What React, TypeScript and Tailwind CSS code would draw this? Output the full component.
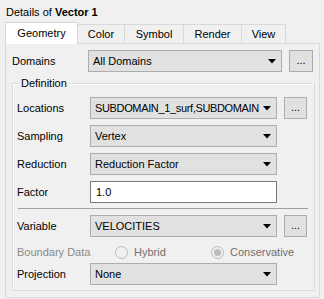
import React from "react";

const font = { fontFamily: '"Liberation Sans", Arial, sans-serif' };

function Arrow() {
  return (
    <svg width="8" height="5" viewBox="0 0 8 5" className="shrink-0">
      <polygon points="0,0 8,0 4,4.5" fill="#000" />
    </svg>
  );
}

function Combo({ text, w, tight }: { text: string; w: string; tight?: boolean }) {
  return (
    <div className={`flex h-[22px] ${w} items-center justify-between gap-[4px] border border-[#adadad] bg-[#e1e1e1] pl-[4px] pr-[5px]`}>
      <span className={`overflow-hidden whitespace-nowrap text-black ${tight ? "tracking-[-0.35px]" : ""}`}>{text}</span>
      <Arrow />
    </div>
  );
}

function Dots({ w }: { w: string }) {
  return (
    <div className={`flex h-[22px] ${w} items-end justify-center border border-[#adadad] bg-[#e1e1e1] pb-[5px] leading-none`}>
      ...
    </div>
  );
}

function Radio({ label, checked }: { label: string; checked?: boolean }) {
  return (
    <div className="flex items-center gap-[6px] text-[#707070]">
      <div className="flex size-[13px] items-center justify-center rounded-full border border-[#bcbcbc] bg-[#f0f0f0]">
        {checked && <div className="size-[7px] rounded-full bg-[#bcbcbc]" />}
      </div>
      <span>{label}</span>
    </div>
  );
}

function Row({ label, children }: { label: string; children: React.ReactNode }) {
  return (
    <div className="flex h-[22px] items-center">
      <div className="w-[73px] shrink-0 text-black">{label}</div>
      {children}
    </div>
  );
}

export default function App() {
  const tabs = [
    { name: "Color", w: "w-[48px]" },
    { name: "Symbol", w: "w-[60px]" },
    { name: "Render", w: "w-[59px]" },
    { name: "View", w: "w-[45px]" },
  ];
  return (
    <div className="h-[299px] w-[324px] overflow-hidden bg-[#f0f0f0] text-[11px] text-black" style={font}>
      <div className="h-[22px] pl-[6px] pt-[5px] leading-[14px]">
        Details of <span className="font-bold">Vector 1</span>
      </div>

      <div className="ml-[5px] flex h-[21px] items-end">
        <div className="relative z-10 -mb-px flex h-[22px] w-[73px] items-center justify-center border border-b-0 border-[#d9d9d9] bg-white">
          Geometry
        </div>
        {tabs.map((t) => (
          <div
            key={t.name}
            className={`-ml-px flex h-[19px] ${t.w} items-center justify-center border border-b-0 border-[#d9d9d9] bg-[#f0f0f0]`}
          >
            {t.name}
          </div>
        ))}
      </div>

      <div className="ml-[5px] h-[255px] w-[315px] border border-[#d9d9d9] px-[6px] pt-[6px]">
        <div className="flex h-[22px] items-center">
          <div className="w-[76px] shrink-0">Domains</div>
          <Combo text="All Domains" w="w-[195px]" />
          <div className="ml-[7px]">
            <Dots w="w-[24px]" />
          </div>
        </div>

        <div className="relative mt-[11px] h-[208px] w-[303px] border border-[#dcdcdc] pl-[4px] pt-[13px] shadow-[inset_1px_1px_0_#ffffff]">
          <div className="absolute left-[7px] top-[-8px] bg-[#f0f0f0] px-[1px] leading-[14px]">Definition</div>

          <div className="flex flex-col gap-[6px]">
            <Row label="Locations">
              <Combo text="SUBDOMAIN_1_surf,SUBDOMAIN" w="w-[187px]" tight />
              <div className="ml-[7px]">
                <Dots w="w-[23px]" />
              </div>
            </Row>
            <Row label="Sampling">
              <Combo text="Vertex" w="w-[187px]" />
            </Row>
            <Row label="Reduction">
              <Combo text="Reduction Factor" w="w-[187px]" />
            </Row>
            <Row label="Factor">
              <div className="flex h-[22px] w-[187px] items-center border border-[#7a7a7a] bg-white pl-[5px]">1.0</div>
            </Row>
          </div>

          <div className="mt-[5px] ml-[1px] h-px w-[290px] bg-[#a0a0a0]" />

          <div className="mt-[6px]">
            <Row label="Variable">
              <Combo text="VELOCITIES" w="w-[187px]" />
              <div className="ml-[7px]">
                <Dots w="w-[23px]" />
              </div>
            </Row>
          </div>

          <div className="mt-[6px] flex h-[18px] items-center">
            <div className="w-[98px] shrink-0 text-[#8a8a8a]">Boundary Data</div>
            <div className="w-[96px]">
              <Radio label="Hybrid" />
            </div>
            <Radio label="Conservative" checked />
          </div>

          <div className="mt-[2px]">
            <Row label="Projection">
              <Combo text="None" w="w-[187px]" />
            </Row>
          </div>
        </div>
      </div>
    </div>
  );
}
